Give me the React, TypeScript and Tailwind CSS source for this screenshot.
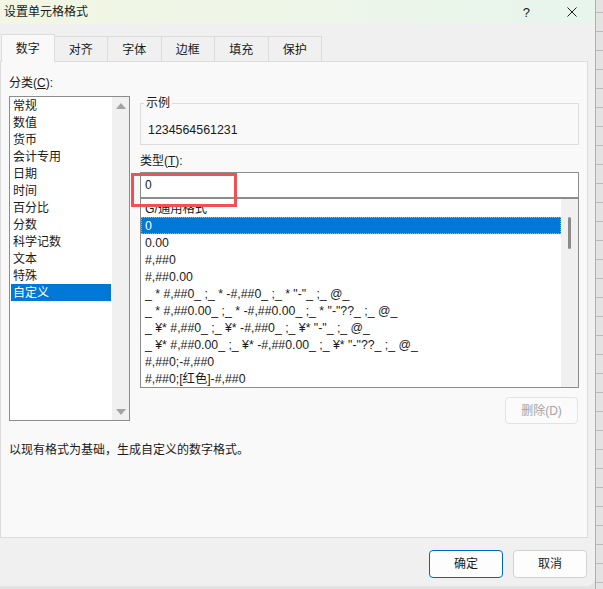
import React from "react";

const tabs = ["数字", "对齐", "字体", "边框", "填充", "保护"];

const categories = [
  "常规",
  "数值",
  "货币",
  "会计专用",
  "日期",
  "时间",
  "百分比",
  "分数",
  "科学记数",
  "文本",
  "特殊",
  "自定义",
];

const formats = [
  "G/通用格式",
  "0",
  "0.00",
  "#,##0",
  "#,##0.00",
  '_ * #,##0_ ;_ * -#,##0_ ;_ * "-"_ ;_ @_',
  '_ * #,##0.00_ ;_ * -#,##0.00_ ;_ * "-"??_ ;_ @_',
  '_ ¥* #,##0_ ;_ ¥* -#,##0_ ;_ ¥* "-"_ ;_ @_',
  '_ ¥* #,##0.00_ ;_ ¥* -#,##0.00_ ;_ ¥* "-"??_ ;_ @_',
  "#,##0;-#,##0",
  "#,##0;[红色]-#,##0",
];

function Arrow({ down }: { down?: boolean }) {
  return (
    <svg width="10" height="6" viewBox="0 0 10 6">
      <path d={down ? "M0 0h10L5 6z" : "M0 6h10L5 0z"} fill="#a3a3a3" />
    </svg>
  );
}

export default function App() {
  return (
    <div className="relative flex h-[589px] w-[603px] overflow-hidden bg-[#e3e3e3] font-[family-name:'Liberation_Sans','Noto_Sans_CJK_SC',sans-serif] text-[12px] text-[#1a1a1a]">
      {/* 对话框 */}
      <div className="flex h-[586px] w-[595px] flex-col overflow-hidden rounded-br-[8px] bg-[#f0f0f0]">
        {/* 标题栏 */}
        <div className="flex h-[24px] items-center bg-linear-to-r from-[#f2f6e3] to-[#e8f5ed]">
          <span className="pl-[4px] leading-[17px] text-[#1b1b1b]">设置单元格格式</span>
          <span className="ml-auto mr-[37px] text-[13px] leading-[17px]">?</span>
          <svg className="mr-[18px]" width="10" height="10" viewBox="0 0 10 10">
            <path d="M0.5 0.5l9 9M9.5 0.5l-9 9" stroke="#1f1f1f" strokeWidth="1" />
          </svg>
        </div>

        {/* 选项卡 */}
        <div className="mt-[10px] flex h-[27px] items-end pl-[1px]">
          {tabs.map((t, i) =>
            i === 0 ? (
              <div
                key={t}
                className="relative z-10 -mb-px flex h-[28px] w-[53.5px] items-center justify-center border-x border-t border-[#dcdcdc] bg-[#f9f9f9] pt-[1px]"
              >
                {t}
              </div>
            ) : (
              <div
                key={t}
                className="flex h-[25px] w-[53.5px] items-center justify-center border-t border-r border-[#dcdcdc] bg-[#f0f0f0] pt-[1px]"
              >
                {t}
              </div>
            )
          )}
        </div>

        {/* 面板 */}
        <div className="h-[477px] w-[588px] border border-[#dcdcdc] bg-[#f9f9f9] px-[8px] pt-[13px]">
          <div className="mb-[4px] leading-[17px]">分类(<span className="underline">C</span>):</div>

          <div className="flex items-start gap-[10px]">
            {/* 分类列表 */}
            <div className="flex h-[325px] w-[121px] border border-[#8c8c8c] bg-white">
              <div className="flex-1 px-[1px]">
                {categories.map((c, i) => (
                  <div
                    key={c}
                    className={
                      i === categories.length - 1
                        ? "h-[17px] bg-[#0078d7] pl-[2px] leading-[18px] text-white"
                        : "h-[17px] pl-[2px] leading-[18px]"
                    }
                  >
                    {c}
                  </div>
                ))}
              </div>
              <div className="flex w-[17px] flex-col items-center justify-between bg-[#f0f0f0] pt-[6px] pb-[5px]">
                <Arrow />
                <Arrow down />
              </div>
            </div>

            {/* 右侧 */}
            <div className="flex w-[439px] flex-col">
              <div className="relative mt-[7px] h-[42px] border border-[#dcdcdc]">
                <span className="absolute top-[-9px] left-[3px] bg-[#f9f9f9] px-[2px] leading-[17px]">示例</span>
                <div className="pt-[17px] pl-[7px] text-[12.4px] leading-[18px]">1234564561231</div>
              </div>

              <div className="mt-[7px] leading-[18px]">类型(<span className="underline">T</span>):</div>

              <div className="mt-[2px] h-[26px] border border-[#8c8c8c] bg-white pl-[4px] leading-[24px]">0</div>

              <div className="flex h-[190px] border border-[#8c8c8c] bg-white">
                <div className="flex-1 pt-[5px]">
                  <div className="h-full overflow-hidden">
                    <div className="-mt-[4px]">
                      {formats.map((f, i) => (
                        <div
                          key={f}
                          className={
                            i === 1
                              ? "h-[17px] border border-dotted border-[#f0a030] bg-[#0078d7] pl-[3px] text-[12.3px] leading-[16px] whitespace-pre text-white"
                              : "h-[17px] border border-transparent pl-[3px] text-[12.3px] leading-[16px] whitespace-pre"
                          }
                        >
                          {f}
                        </div>
                      ))}
                    </div>
                  </div>
                </div>
                <div className="w-[17px] bg-[#f0f0f0]">
                  <div className="mx-auto mt-[18px] h-[32px] w-[3px] rounded-full bg-[#8a8a8a]" />
                </div>
              </div>

              <button className="mt-[9px] mr-[1px] h-[27px] w-[73px] self-end rounded-[4px] border border-[#e3e3e3] bg-[#fbfbfb] text-[#a3a3a3]">
                删除(D)
              </button>
            </div>
          </div>

          <div className="mt-[17px] leading-[18px]">以现有格式为基础，生成自定义的数字格式。</div>
        </div>

        {/* 按钮 */}
        <div className="mt-[12px] flex justify-end gap-[10px] pr-[8px]">
          <button className="h-[28px] w-[74px] rounded-[4px] border border-[#0067c0] bg-[#fdfdfd]">确定</button>
          <button className="h-[28px] w-[74px] rounded-[4px] border border-[#d1d1d1] bg-[#fdfdfd]">取消</button>
        </div>
      </div>

      {/* 表格背景 */}
      <div className="h-full flex-1 border-l border-[#b0b0b0] bg-[repeating-linear-gradient(180deg,#e3e3e3_0px,#e3e3e3_18px,#bcbcbc_18px,#bcbcbc_19px)] bg-[position:0_-6px]" />

      {/* 标注框 */}
      <div className="absolute top-[173px] left-[131px] h-[34px] w-[106px] border-[3px] border-[#f05252]" />
    </div>
  );
}
